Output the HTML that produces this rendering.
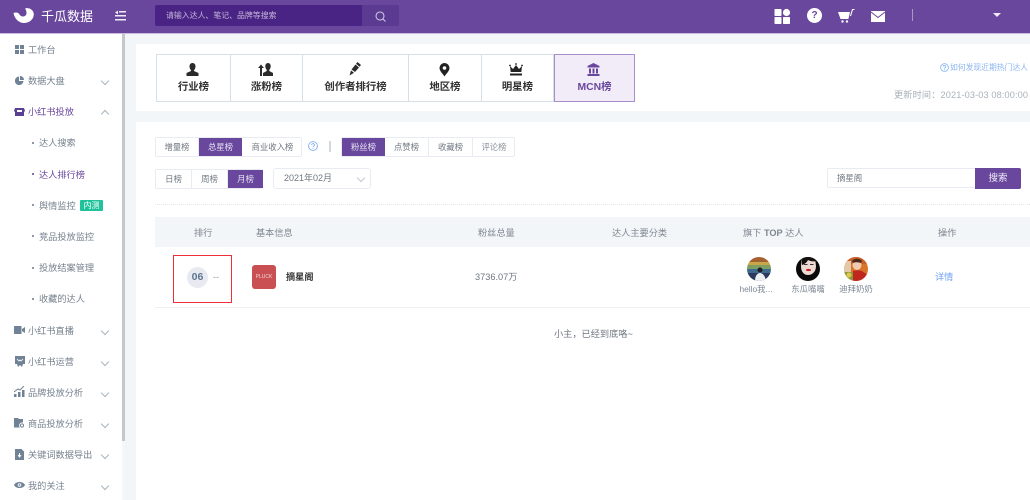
<!DOCTYPE html>
<html><head><meta charset="utf-8"><style>
html,body{margin:0;padding:0}
body{width:1030px;height:500px;overflow:hidden;position:relative;background:#f3f6f9;font-family:"Liberation Sans","Noto Sans CJK SC",sans-serif;color:#7d8894;filter:blur(.3px)}
.a,.t,svg.i{position:absolute}
.t{white-space:nowrap;line-height:14px;font-size:9px;margin-top:1px}
.c{transform:translateX(-50%)}
.m{font-size:9.2px;left:28px;color:#75818e}
.s{font-size:9.2px;left:39px;color:#75818e}
.d{position:absolute;left:32px;width:2px;height:2px;border-radius:50%;background:#67788c}
.ch{position:absolute;left:102px;width:5px;height:5px;border-left:1px solid #a9b3bd;border-bottom:1px solid #a9b3bd;transform:rotate(-45deg)}
.tab{position:absolute;top:54px;height:46px;border:1px solid #d5dfe8;border-left:0;background:#fff}
.tab b{position:absolute;left:0;right:0;top:25px;text-align:center;font-size:10.4px;line-height:15px;color:#333}
.g{position:absolute;border:1px solid #e8ecf2;border-radius:2px;background:#fff;box-sizing:border-box}
.b{position:absolute;top:0;bottom:0;text-align:center;font-size:8.4px;color:#6f7780;line-height:19px;border-right:1px solid #e8ecf2;box-sizing:border-box}
.on{background:#68479d;color:#e9e3f3;border-right:0}
.th{font-size:9.2px;color:#7d868f;top:225px}
</style></head><body>
<div class="a" style="left:0;top:0;width:1030px;height:33px;background:#68479d"></div>
<div class="a" style="left:0;top:33px;width:1030px;height:1px;background:#c9b9dd"></div>
<svg class="i" style="left:13px;top:7px" width="22" height="17" viewBox="0 0 22 17"><path d="M0.500 6C3 5 5.500 5.500 6.500 7.500 8 10 11.500 10 13 8 14 6 13.500 3.500 12 1.500 13 1 15 1 16.500 1.500 20 3 21.500 6 20.500 9.500 19 14 15 16 11 16 6 16 1.500 12 0.500 6Z" fill="#fff"/></svg>
<div class="t" style="left:41px;top:6px;font-size:13px;line-height:20px;color:#fff">千瓜数据</div>
<svg class="i" style="left:115px;top:10px" width="11" height="11" viewBox="0 0 11 11" fill="#f0ecf6"><rect x="4" y="1" width="7" height="1.500"/><rect x="0" y="5" width="11" height="1.500"/><rect x="0" y="9" width="11" height="1.500"/><path d="M0 2.500 3 .5v4z"/></svg>
<div class="a" style="left:155px;top:5px;width:207px;height:21px;background:#4a2484;border-radius:2px 0 0 2px"></div>
<div class="a" style="left:362px;top:5px;width:37px;height:21px;background:#5a3b91;border-radius:0 2px 2px 0"></div>
<div class="t" style="left:166px;top:8px;font-size:7.900px;color:#c3b5da">请输入达人、笔记、品牌等搜索</div>
<svg class="i" style="left:374px;top:10px" width="13" height="13" viewBox="0 0 13 13" fill="none" stroke="#cfc5e0" stroke-width="1.100"><circle cx="6" cy="6" r="4"/><path d="M9 9l2.500 2.500"/></svg>

<svg class="i" style="left:774px;top:8px" width="17" height="17" viewBox="0 0 17 17" fill="#fff"><rect x="0.500" y="1" width="7" height="7" rx=".7"/><circle cx="12.500" cy="4.500" r="3.600"/><rect x="0.500" y="9" width="7" height="7" rx=".7"/><rect x="9" y="9" width="7" height="7" rx=".7"/></svg>
<div class="a" style="left:807px;top:8px;width:15px;height:15px;border-radius:50%;background:#fff;color:#68479d;font:bold 10px/15px 'Liberation Sans',sans-serif;text-align:center">?</div>
<svg class="i" style="left:838px;top:9px" width="17" height="15" viewBox="0 0 17 15" fill="#fff"><path d="M0 3h12l-1.600 7H2.500z"/><path d="M12.500 7 14.500 .5h2" fill="none" stroke="#fff" stroke-width="1.100"/><circle cx="4.500" cy="12.500" r="1.200"/><circle cx="9" cy="12.500" r="1.200"/></svg>
<svg class="i" style="left:871px;top:11px" width="14" height="11" viewBox="0 0 14 11"><rect width="14" height="11" fill="#fff"/><path d="M0 1 7 6.500 14 1" fill="none" stroke="#68479d" stroke-width="1"/></svg>
<div class="a" style="left:912px;top:9px;width:1px;height:12px;background:#a898c6"></div>
<svg class="i" style="left:993px;top:13px" width="8" height="5"><path d="M0 0h8L4 4z" fill="#f0ecf6"/></svg>

<!-- sidebar -->
<div class="a" style="left:0;top:34px;width:122px;height:466px;background:#fff"></div>
<div class="a" style="left:122px;top:34px;width:3px;height:407px;background:#c4c7cb"></div>
<div class="a" style="left:122px;top:441px;width:3px;height:59px;background:#f6f7f8"></div>

<svg class="i" style="left:15px;top:45px" width="9" height="9" fill="#6f8296"><rect width="4" height="4"/><rect x="5" width="4" height="4"/><rect y="5" width="4" height="4"/><rect x="5" y="5" width="4" height="4"/></svg>
<div class="t m" style="top:42px">工作台</div>
<svg class="i" style="left:15px;top:76px" width="9" height="9" viewBox="0 0 9 9" fill="#6f8296"><path d="M4 .5V5h4.500A4.300 4.300 0 1 1 4 .5z"/><path d="M5 0a4 4 0 0 1 4 4H5z"/></svg>
<div class="t m" style="top:73px">数据大盘</div><div class="ch" style="top:78px"></div>
<svg class="i" style="left:14px;top:107px" width="11" height="10" viewBox="0 0 11 10" fill="#5b3f93"><path d="M1 1h9l1 3-1 1v4H1V5L0 4z"/><path d="M3 3h5v2H3z" fill="#fff"/></svg>
<div class="t m" style="top:104px;color:#68479d">小红书投放</div><div class="ch" style="top:111px;transform:rotate(135deg)"></div>

<div class="d" style="top:142px"></div><div class="t s" style="top:135px">达人搜索</div>
<div class="d" style="top:173px;background:#5b3f93"></div><div class="t s" style="top:167px;color:#68479d">达人排行榜</div>
<div class="d" style="top:204px"></div><div class="t s" style="top:198px">舆情监控</div>
<div class="a" style="left:80px;top:200px;width:23px;height:11px;background:#1fc29a;border-radius:1px;color:#fff;font-size:8px;line-height:11px;text-align:center">内测</div>
<div class="d" style="top:235px"></div><div class="t s" style="top:229px">竞品投放监控</div>
<div class="d" style="top:267px"></div><div class="t s" style="top:260px">投放结案管理</div>
<div class="d" style="top:298px"></div><div class="t s" style="top:291px">收藏的达人</div>

<svg class="i" style="left:14px;top:326px" width="11" height="8" viewBox="0 0 11 8" fill="#6f8296"><rect width="7.500" height="8" rx=".5"/><path d="M8 3l3-2v6L8 5z"/></svg>
<div class="t m" style="top:323px">小红书直播</div><div class="ch" style="top:328px"></div>
<svg class="i" style="left:15px;top:356px" width="10" height="11" viewBox="0 0 10 11" fill="#6f8296"><path d="M0 0h10v8H8l-1 3-2-2-2 2-1-3H0z"/><path d="M2 3l2 2 1-1 1 1 2-2" stroke="#fff" fill="none" stroke-width=".8"/></svg>
<div class="t m" style="top:354px">小红书运营</div><div class="ch" style="top:359px"></div>
<svg class="i" style="left:14px;top:386px" width="11" height="11" viewBox="0 0 11 11" fill="#6f8296"><rect y="8" width="2.500" height="3"/><rect x="4" y="6" width="2.500" height="5"/><rect x="8" y="4" width="2.500" height="7"/><path d="M0 6 4 3l2 1 4-4" fill="none" stroke="#6f8296" stroke-width="1"/></svg>
<div class="t m" style="top:385px">品牌投放分析</div><div class="ch" style="top:390px"></div>
<svg class="i" style="left:14px;top:418px" width="11" height="10" viewBox="0 0 11 10" fill="#6f8296"><path d="M0 0h4l1 1h4v3.500a3 3 0 0 0-3 5H0z"/><circle cx="8" cy="7.500" r="1.600" fill="none" stroke="#6f8296"/></svg>
<div class="t m" style="top:416px">商品投放分析</div><div class="ch" style="top:421px"></div>
<svg class="i" style="left:15px;top:449px" width="9" height="11" viewBox="0 0 9 11"><path d="M0 0h6.500L9 2.500V11H0z" fill="#6f8296"/><path d="M4.500 4v3M3 6l1.500 2L6 6" stroke="#fff" fill="none" stroke-width="1"/></svg>
<div class="t m" style="top:447px">关键词数据导出</div><div class="ch" style="top:452px"></div>
<svg class="i" style="left:14px;top:481px" width="11" height="8" viewBox="0 0 11 8"><path d="M0 4C2 0 9 0 11 4 9 8 2 8 0 4z" fill="#6f8296"/><circle cx="5.500" cy="4" r="1.800" fill="#fff"/><circle cx="5.500" cy="4" r=".9" fill="#6f8296"/></svg>
<div class="t m" style="top:478px">我的关注</div><div class="ch" style="top:483px"></div>

<!-- top card -->
<div class="a" style="left:136px;top:44px;width:894px;height:67px;background:#fff"></div>
<div class="tab" style="left:156px;width:73px;border-left:1px solid #d5dfe8"><b>行业榜</b></div>
<div class="tab" style="left:231px;width:71px"><b>涨粉榜</b></div>
<div class="tab" style="left:303px;width:105px"><b>创作者排行榜</b></div>
<div class="tab" style="left:409px;width:72px"><b>地区榜</b></div>
<div class="tab" style="left:482px;width:71px"><b>明星榜</b></div>
<div class="tab" style="left:554px;top:54px;width:79px;border:1px solid #a68fca;background:#f1ecf7"><b style="color:#68479d">MCN榜</b></div>
<svg class="i" style="left:186px;top:63px" width="13" height="13" viewBox="0 0 13 13" fill="#2b2b2b"><path d="M6.500 0C8.500 0 9.500 1.500 9.500 3.500 9.500 5 8.800 6.500 8 7.200V8l4.500 2v3H.5v-3L5 8v-.8C4.200 6.500 3.500 5 3.500 3.500 3.500 1.500 4.500 0 6.500 0z"/></svg>
<svg class="i" style="left:258px;top:63px" width="15" height="13" viewBox="0 0 15 13" fill="#2b2b2b"><path d="M10 0C11.800 0 12.700 1.500 12.700 3.200 12.700 4.800 12 6 11.300 6.800V8L15 10v3H5v-3l3.700-2V6.800C8 6 7.300 4.800 7.300 3.200 7.300 1.500 8.200 0 10 0z"/><path d="M3 1.500 6 5H4v8H2V5H0z"/></svg>
<svg class="i" style="left:349px;top:62px" width="12" height="14" viewBox="0 0 12 14" fill="#2b2b2b"><path d="M8.500 0 12 3 10.500 4.800 7 1.800z"/><path d="M6.500 2.500 10 5.500 6 10 2.500 7.500z"/><path d="M2 8.500 5 10.800 .5 13.500z"/></svg>
<svg class="i" style="left:439px;top:63px" width="11" height="14" viewBox="0 0 11 14"><path d="M5.500 0A5 5 0 0 1 10.500 5C10.500 8 7 11 5.500 13.500 4 11 .5 8 .5 5A5 5 0 0 1 5.500 0z" fill="#222"/><circle cx="5.500" cy="5" r="1.800" fill="#fff"/></svg>
<svg class="i" style="left:509px;top:63px" width="14" height="13" viewBox="0 0 14 13" fill="#222"><circle cx="1" cy="2.500" r=".9"/><circle cx="7" cy="1" r=".9"/><circle cx="13" cy="2.500" r=".9"/><path d="M1 3 4 6 7 2l3 4 3-3 -.7 6H1.700z"/><rect x="1" y="10.500" width="12" height="2"/></svg>
<svg class="i" style="left:587px;top:63px" width="13" height="13" viewBox="0 0 13 13" fill="#68479d"><path d="M6.500 0 12.500 3v1.500H.5V3z"/><rect x="2" y="5.500" width="2" height="5"/><rect x="5.500" y="5.500" width="2" height="5"/><rect x="9" y="5.500" width="2" height="5"/><rect x=".5" y="11" width="12" height="2"/></svg>
<svg class="i" style="left:940px;top:63px" width="9" height="9" viewBox="0 0 9 9" fill="none" stroke="#7fb0f5" stroke-width=".8"><circle cx="4.500" cy="4.500" r="3.900"/><path d="M3.200 3.500a1.300 1.300 0 1 1 1.800 1.300c-.4.200-.5.400-.5.800M4.500 6.300v.8"/></svg>
<div class="t" style="left:950px;top:60px;font-size:7.800px;color:#8ab4f0">如何发现近期热门达人</div>
<div class="t" style="left:894px;top:87px;font-size:9.200px;letter-spacing:.12px;color:#a9b1b9">更新时间：2021-03-03 08:00:00</div>

<!-- main card -->
<div class="a" style="left:136px;top:122px;width:894px;height:378px;background:#fff"></div>
<div class="g" style="left:155px;top:137px;width:147px;height:20px">
<div class="b" style="left:0;width:43px">增量榜</div><div class="b on" style="left:43px;width:43px">总星榜</div><div class="b" style="left:87px;width:59px;border:0">商业收入榜</div></div>
<svg class="i" style="left:308px;top:141px" width="10" height="10" viewBox="0 0 10 10" fill="none" stroke="#6f9ff0" stroke-width=".8"><circle cx="5" cy="5" r="4.400"/><path d="M3.600 3.900a1.400 1.400 0 1 1 2 1.400c-.4.200-.6.400-.6.900M5 7v.8"/></svg>
<div class="a" style="left:329px;top:141px;width:2px;height:11px;background:#d3d8de"></div>
<div class="g" style="left:341px;top:137px;width:174px;height:20px">
<div class="b on" style="left:0;width:43px">粉丝榜</div><div class="b" style="left:43px;width:44px">点赞榜</div><div class="b" style="left:87px;width:44px">收藏榜</div><div class="b" style="left:131px;width:42px;border:0;color:#8a929a">评论榜</div></div>
<div class="g" style="left:155px;top:169px;width:108px;height:20px">
<div class="b" style="left:0;width:36px">日榜</div><div class="b" style="left:36px;width:36px">周榜</div><div class="b on" style="left:72px;width:35px">月榜</div></div>
<div class="g" style="left:273px;top:168px;width:98px;height:21px;border-radius:3px"></div>
<div class="t" style="left:284px;top:170px;font-size:9px;color:#6f7780">2021年02月</div>
<div class="a" style="left:358px;top:175px;width:5px;height:5px;border-left:1px solid #c3c9d0;border-bottom:1px solid #c3c9d0;transform:rotate(-45deg)"></div>

<div class="g" style="left:827px;top:168px;width:149px;height:20px;border-radius:2px 0 0 2px"></div>
<div class="t" style="left:837px;top:170px;font-size:8.400px;color:#6f7780">摘星阁</div>
<div class="a" style="left:975px;top:168px;width:46px;height:21px;background:#68479d;border-radius:0 2px 2px 0;color:#f0ecf6;font-size:9.500px;line-height:21px;text-align:center">搜索</div>
<div class="a" style="left:155px;top:204px;width:875px;border-top:1px dotted #e4e7ea"></div>

<div class="a" style="left:155px;top:217px;width:875px;height:30px;background:#f3f6f9"></div>
<div class="t th" style="left:194px">排行</div>
<div class="t th" style="left:256px">基本信息</div>
<div class="t th" style="left:478px">粉丝总量</div>
<div class="t th" style="left:612px">达人主要分类</div>
<div class="t th" style="left:743px">旗下 <span style="font-weight:bold">TOP</span> 达人</div>
<div class="t th" style="left:938px">操作</div>

<div class="a" style="left:155px;top:307px;width:875px;height:1px;background:#eef0f2"></div>
<div class="a" style="left:173px;top:255px;width:59px;height:48px;border:1px solid #ef2f38;box-sizing:border-box"></div>
<div class="a" style="left:187px;top:267px;width:21px;height:21px;border-radius:50%;background:#e7ebf1;color:#5d7590;font:bold 10.500px/21px 'Liberation Sans',sans-serif;text-align:center">06</div>
<div class="t" style="left:213px;top:269px;color:#8f979f">--</div>
<div class="a" style="left:252px;top:265px;width:24px;height:24px;border-radius:3px;background:#c94f52;color:#f3d9d9;font:5px/24px 'Liberation Sans',sans-serif;text-align:center">PLUCK</div>
<div class="t" style="left:286px;top:269px;font-size:9.200px;color:#333;font-weight:bold">摘星阁</div>
<div class="t" style="left:475px;top:269px;font-size:9.200px;color:#6f7780">3736.07万</div>

<svg class="i" style="left:747px;top:257px" width="24" height="24" viewBox="0 0 24 24"><defs><clipPath id="r"><circle cx="12" cy="12" r="12"/></clipPath></defs><g clip-path="url(#r)"><rect width="24" height="5" fill="#a5612f"/><rect y="5" width="24" height="3" fill="#c9a64a"/><rect y="8" width="24" height="4" fill="#7f9e62"/><rect y="12" width="24" height="4" fill="#3f6a90"/><rect y="16" width="24" height="8" fill="#2b3a5c"/><circle cx="13" cy="13" r="2.500" fill="#1d1d22"/><path d="M8 24c0-6 3-8 5-8s5 2 6 8z" fill="#eceef2"/></g></svg>
<svg class="i" style="left:796px;top:257px" width="24" height="24" viewBox="0 0 24 24"><defs><clipPath id="r2"><circle cx="12" cy="12" r="12"/></clipPath></defs><g clip-path="url(#r2)"><rect width="24" height="24" fill="#0a0a0a"/><path d="M6 1h13l1 8c0 6-4 9-8 9s-7-3-7-9z" fill="#eed9d3"/><path d="M6 0h14v4c-3 1-6 0-8-1-1 2-3 4-6 5z" fill="#141010"/><rect x="8" y="7" width="3.500" height="1" fill="#333"/><rect x="14" y="7" width="3.500" height="1" fill="#333"/><ellipse cx="12.500" cy="13" rx="2.500" ry="1.100" fill="#c4202a"/></g></svg>
<svg class="i" style="left:844px;top:257px" width="24" height="24" viewBox="0 0 24 24"><defs><clipPath id="r3"><circle cx="12" cy="12" r="12"/></clipPath></defs><g clip-path="url(#r3)"><rect width="24" height="24" fill="#d9742b"/><rect y="0" width="24" height="7" fill="#c8602a"/><rect x="0" y="4" width="7" height="12" fill="#e3c9a8"/><ellipse cx="13" cy="8" rx="4.500" ry="5" fill="#efcbb0"/><path d="M8 4c2-3 8-3 10 0l-1 2c-3-1-6-1-8 0z" fill="#4a2a1a"/><path d="M8 24l1-10c3-1 6-1 9 0l6 4v6z" fill="#c0281f"/><path d="M0 15h9v9H0z" fill="#8a9a3a"/><circle cx="5" cy="18" r="2.500" fill="#e2c84a"/></g></svg>
<div class="t c" style="left:756px;top:281px;font-size:8.400px;color:#7d8894">hello我...</div>
<div class="t c" style="left:808px;top:281px;font-size:8.400px;color:#7d8894">东瓜嘴嘴</div>
<div class="t c" style="left:856px;top:281px;font-size:8.400px;color:#7d8894">迪拜奶奶</div>
<div class="t" style="left:935px;top:269px;font-size:9.200px;color:#6d9ff0">详情</div>
<div class="t" style="left:554px;top:326px;font-size:9.200px;color:#6f7780">小主，已经到底咯~</div>
</body></html>
